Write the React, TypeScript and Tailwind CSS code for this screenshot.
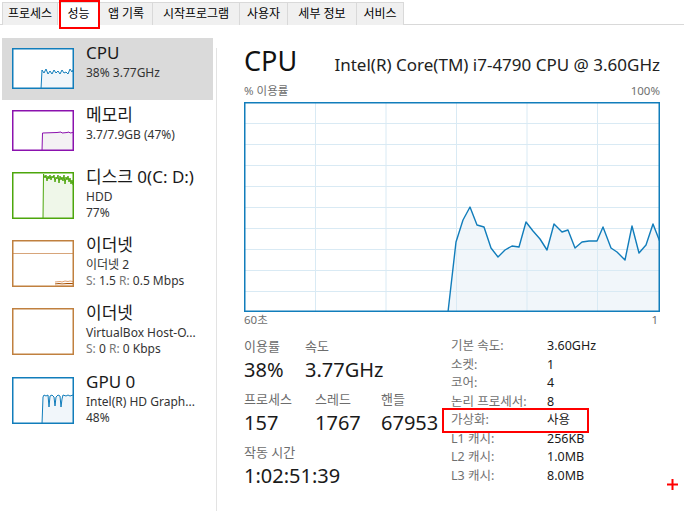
import React from 'react';

const tabs = [
  { label: '프로세스', w: 'w-[56px]', sel: false },
  { label: '성능', w: 'w-[42px]', sel: true },
  { label: '앱 기록', w: 'w-[53px]', sel: false },
  { label: '시작프로그램', w: 'w-[87px]', sel: false },
  { label: '사용자', w: 'w-[48px]', sel: false },
  { label: '세부 정보', w: 'w-[69px]', sel: false },
  { label: '서비스', w: 'w-[47px]', sel: false },
];

const cpuPts: [number, number][] = [
  [204, 210], [212, 140], [219, 118], [226, 105], [233, 123], [240, 125], [247, 146], [254, 155],
  [261, 148], [268, 144], [275, 145], [282, 120], [289, 129], [296, 137], [303, 148], [310, 122],
  [318, 130], [324, 128], [331, 146], [338, 140], [345, 139], [353, 139], [359, 125], [367, 146],
  [373, 150], [381, 158], [388, 124], [395, 151], [402, 143], [409, 122], [416, 140],
];

function toPath(p: [number, number][]) {
  return p.map((q, i) => `${i === 0 ? 'M' : 'L'}${q[0]} ${q[1]}`).join(' ');
}

function BigGraph() {
  const line = toPath(cpuPts);
  const fill = line + ' L416 210 Z';
  const hs = [21, 42, 63, 84, 105, 126, 147, 168, 189];
  const vs = [71, 141.5, 212, 282.5, 353];
  return (
    <svg width="416" height="210" viewBox="0 0 416 210" className="block">
      <rect x="0" y="0" width="416" height="210" fill="#ffffff" />
      <path d={fill} fill="#f1f6fa" />
      {hs.map((y) => (
        <line key={'h' + y} x1="0" x2="416" y1={y + 0.5} y2={y + 0.5} stroke="#d9eaf4" strokeWidth="1" />
      ))}
      {vs.map((x) => (
        <line key={'v' + x} x1={x + 0.5} x2={x + 0.5} y1="0" y2="210" stroke="#d9eaf4" strokeWidth="1" />
      ))}
      <path d={line} fill="none" stroke="#117dbb" strokeWidth="1.4" strokeLinejoin="round" />
      <rect x="0.75" y="0.75" width="414.5" height="208.5" fill="none" stroke="#117dbb" strokeWidth="1.5" />
    </svg>
  );
}

function Thumb({ h, color, fill, line, children }: { h: number; color: string; fill?: string; line?: string; children?: React.ReactNode }) {
  return (
    <svg width="62" height={h} viewBox={`0 0 62 ${h}`} className="block">
      <rect x="0" y="0" width="62" height={h} fill="#ffffff" />
      {line && fill && <path d={line + ` L61 ${h} L30 ${h} Z`} fill={fill} />}
      {line && <path d={line} fill="none" stroke={color} strokeWidth="1" />}
      {children}
      <rect x="0.75" y="0.75" width="60.5" height={h - 1.5} fill="none" stroke={color} strokeWidth="1.5" />
    </svg>
  );
}

function SideItem({
  selected,
  h,
  thumbH,
  thumb,
  title,
  lines,
}: {
  selected?: boolean;
  h: string;
  thumbH: string;
  thumb: React.ReactNode;
  title: string;
  lines: React.ReactNode[];
}) {
  return (
    <div className={`flex items-start w-[211px] ${h} ${selected ? 'bg-[#dadada]' : 'bg-white'}`}>
      <div className={`mt-[10px] ml-[10px] w-[62px] ${thumbH}`}>{thumb}</div>
      <div className="ml-[12px] pt-[5px]">
        <div className="text-[17px] leading-[20px] text-[#1a1a1a] whitespace-nowrap">{title}</div>
        {lines.map((l, i) => (
          <div key={i} className={`text-[12px] leading-[15.5px] text-[#333333] whitespace-nowrap ${i === 0 ? 'mt-[2px]' : ''}`}>
            {l}
          </div>
        ))}
      </div>
    </div>
  );
}

export default function App() {
  const rightRows: [string, string][] = [
    ['기본 속도:', '3.60GHz'],
    ['소켓:', '1'],
    ['코어:', '4'],
    ['논리 프로세서:', '8'],
    ['가상화:', '사용'],
    ['L1 캐시:', '256KB'],
    ['L2 캐시:', '1.0MB'],
    ['L3 캐시:', '8.0MB'],
  ];

  return (
    <div className="relative w-[684px] h-[511px] overflow-hidden bg-white font-['Noto_Sans','Noto_Sans_CJK_KR',sans-serif] text-black">
      {/* Tabs */}
      <div className="pt-[2px]">
        <div className="flex h-[23px] border-b border-[#d9d9d9] pl-[2px]">
          {tabs.map((t) => (
            <div
              key={t.label}
              className={`${t.w} h-[23px] flex items-center justify-center text-[12px] leading-[14px] whitespace-nowrap border-t border-r border-[#d9d9d9] first:border-l ${
                t.sel ? 'bg-white' : 'bg-[#f0f0f0]'
              }`}
            >
              {t.label}
            </div>
          ))}
        </div>
      </div>

      {/* Main */}
      <div className="flex h-[486px]">
        {/* Sidebar */}
        <div className="w-[216px] pt-[13px] pl-[2px]">
          <SideItem
            selected
            h="h-[62px]"
            thumbH="h-[41px]"
            title="CPU"
            lines={['38% 3.77GHz']}
            thumb={
              <Thumb
                h={41}
                color="#117dbb"
                fill="#f1f6fa"
                line="M29 41 L30 22 L32 25 L34 21 L36 26 L38 23 L40 26 L42 22 L44 25 L46 23 L48 26 L50 22 L52 25 L54 24 L56 26 L58 21 L60 24 L61 22"
              />
            }
          />
          <SideItem
            h="h-[62px]"
            thumbH="h-[41px]"
            title="메모리"
            lines={['3.7/7.9GB (47%)']}
            thumb={
              <Thumb
                h={41}
                color="#8b12ae"
                fill="#f4f2f4"
                line="M30 41 L30.5 23 L45 22.5 L49 22 L50 23 L55 22.5 L57 22 L58 23 L61 22.5"
              />
            }
          />
          <SideItem
            h="h-[68px]"
            thumbH="h-[47px]"
            title="디스크 0(C: D:)"
            lines={['HDD', '77%']}
            thumb={
              <Thumb
                h={47}
                color="#4da60c"
                fill="#eff7e9"
                line="M31 47 L31.5 2 L33 6 L34 3 L35 9 L36 4 L37 7 L38 3 L39 8 L40 4 L41 6 L42 3 L43 10 L44 5 L45 7 L46 3 L47 11 L48 4 L49 8 L50 5 L51 9 L52 3 L53 12 L54 5 L55 8 L56 4 L57 10 L58 6 L59 12 L60 8 L61 13"
              />
            }
          />
          <SideItem
            h="h-[68px]"
            thumbH="h-[47px]"
            title="이더넷"
            lines={[
              '이더넷 2',
              <span key="s">
                <span className="text-[#777777]">S:</span> 1.5 <span className="text-[#777777]">R:</span> 0.5 Mbps
              </span>,
            ]}
            thumb={
              <Thumb h={47} color="#c0803f">
                <line x1="1" x2="61" y1="13.5" y2="13.5" stroke="#d7a57a" strokeWidth="1" />
                <path d="M43 42 L48 41.5 L50 42 L53 41 L56 41.5 L58 41 L61 41.5" fill="none" stroke="#e0a070" strokeWidth="1" />
                <path d="M43 44 L47 43.5 L50 44 L55 43.5 L61 43.5" fill="none" stroke="#a74f01" strokeWidth="1" />
                <rect x="43" y="44.5" width="18" height="1.5" fill="#f3dccb" />
              </Thumb>
            }
          />
          <SideItem
            h="h-[69px]"
            thumbH="h-[47px]"
            title="이더넷"
            lines={[
              'VirtualBox Host-O...',
              <span key="s">
                <span className="text-[#777777]">S:</span> 0 <span className="text-[#777777]">R:</span> 0 Kbps
              </span>,
            ]}
            thumb={<Thumb h={47} color="#c0803f" />}
          />
          <SideItem
            h="h-[68px]"
            thumbH="h-[47px]"
            title="GPU 0"
            lines={['Intel(R) HD Graph...', '48%']}
            thumb={
              <Thumb
                h={47}
                color="#117dbb"
                fill="#f1f6fa"
                line="M30 47 L31 20 L32 18 L34 19 L36 18 L37 30 L38 19 L40 18 L42 20 L43 29 L44 20 L46 18 L48 19 L49 30 L50 22 L51 18 L54 19 L56 18 L58 19 L61 18"
              />
            }
          />
        </div>

        {/* Separator */}
        <div className="w-px bg-[#e3e3e3] mt-[23px]" />

        {/* Right panel */}
        <div className="flex-1 pl-[27px]">
          <div className="mt-[20px] h-[32px] w-[416px] flex items-baseline justify-between">
            <div className="text-[27px] leading-[32px] text-[#111111]">CPU</div>
            <div className="text-[17px] leading-[20px] text-[#222222] whitespace-nowrap">Intel(R) Core(TM) i7-4790 CPU @ 3.60GHz</div>
          </div>
          <div className="mt-[6px] h-[16px] w-[416px] flex justify-between text-[11.5px] leading-[16px] text-[#707070]">
            <span>% 이용률</span>
            <span>100%</span>
          </div>
          <div className="mt-[3px] w-[416px] h-[210px]">
            <BigGraph />
          </div>
          <div className="h-[16px] w-[416px] flex justify-between text-[11.5px] leading-[16px] text-[#707070]">
            <span>60초</span>
            <span className="pr-[2px]">1</span>
          </div>

          <div className="mt-[9px] flex">
            {/* left stats */}
            <div className="w-[207px]">
              <div className="flex">
                <div className="w-[61px]">
                  <div className="h-[18px] text-[13px] leading-[18px] text-[#6d6d6d]">이용률</div>
                  <div className="mt-[1px] h-[28px] text-[20px] leading-[28px] text-[#1a1a1a]">38%</div>
                </div>
                <div>
                  <div className="h-[18px] text-[13px] leading-[18px] text-[#6d6d6d]">속도</div>
                  <div className="mt-[1px] h-[28px] text-[20px] leading-[28px] text-[#1a1a1a]">3.77GHz</div>
                </div>
              </div>
              <div className="flex mt-[6px]">
                <div className="w-[71px]">
                  <div className="h-[18px] text-[13px] leading-[18px] text-[#6d6d6d]">프로세스</div>
                  <div className="mt-[1px] h-[28px] text-[20px] leading-[28px] text-[#1a1a1a]">157</div>
                </div>
                <div className="w-[66px]">
                  <div className="h-[18px] text-[13px] leading-[18px] text-[#6d6d6d]">스레드</div>
                  <div className="mt-[1px] h-[28px] text-[20px] leading-[28px] text-[#1a1a1a]">1767</div>
                </div>
                <div>
                  <div className="h-[18px] text-[13px] leading-[18px] text-[#6d6d6d]">핸들</div>
                  <div className="mt-[1px] h-[28px] text-[20px] leading-[28px] text-[#1a1a1a]">67953</div>
                </div>
              </div>
              <div className="mt-[6px]">
                <div className="h-[18px] text-[13px] leading-[18px] text-[#6d6d6d]">작동 시간</div>
                <div className="mt-[1px] h-[28px] text-[20px] leading-[28px] text-[#1a1a1a]">1:02:51:39</div>
              </div>
            </div>

            {/* right stats */}
            <div>
              {rightRows.map(([k, v]) => (
                <div key={k} className="flex h-[18.5px] text-[12.5px] leading-[18.5px] whitespace-nowrap">
                  <div className="w-[96px] text-[#707070]">{k}</div>
                  <div className="text-[#1a1a1a]">{v}</div>
                </div>
              ))}
            </div>
          </div>
        </div>
      </div>

      {/* Annotations */}
      <div className="absolute left-[59px] top-0 w-[41px] h-[29px] border-2 border-[#ff0000]" />
      <div className="absolute left-[442px] top-[408px] w-[147px] h-[25px] border-2 border-[#ff0000]" />
      <svg className="absolute left-[667px] top-[479px]" width="11" height="11" viewBox="0 0 11 11">
        <line x1="5.5" y1="0" x2="5.5" y2="11" stroke="#ff0000" strokeWidth="2" />
        <line x1="0" y1="5.5" x2="11" y2="5.5" stroke="#ff0000" strokeWidth="2" />
      </svg>
    </div>
  );
}
